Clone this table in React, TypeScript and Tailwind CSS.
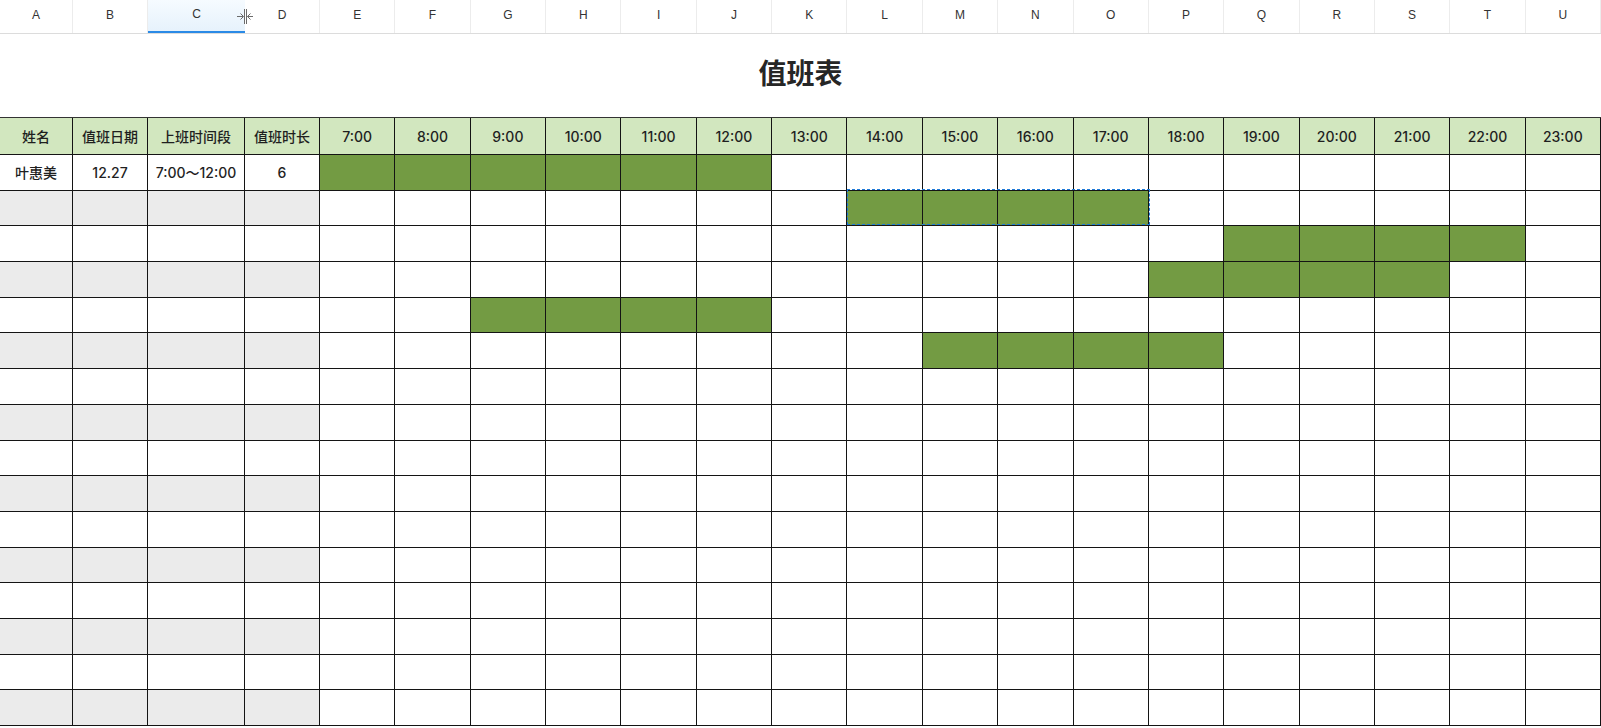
import React from 'react';

const letters = 'ABCDEFGHIJKLMNOPQRSTU'.split('');
const hours = Array.from({ length: 17 }, (_, i) => `${i + 7}:00`);

// filled hour ranges per row: [startCol, endCol] (0 = 7:00)
const shifts: Record<number, [number, number]> = {
  0: [0, 5],
  1: [7, 10],
  2: [12, 15],
  3: [11, 14],
  4: [2, 5],
  5: [8, 11],
};

const firstRow = ['叶惠美', '12.27', '7:00～12:00', '6'];

const gridCols = 'grid grid-cols-[73px_75px_97px_75px_repeat(17,1fr)]';

function ResizeIcon() {
  return (
    <svg width="18" height="17" viewBox="0 0 18 17" className="absolute left-[236px] top-[8px]">
      <g stroke="#6b6b6b" strokeWidth="1" fill="none">
        <line x1="8.5" y1="1" x2="8.5" y2="16" />
        <line x1="10.5" y1="1" x2="10.5" y2="16" />
        <line x1="1" y1="8.5" x2="7" y2="8.5" />
        <polyline points="4.5,5.5 7.5,8.5 4.5,11.5" />
        <line x1="17" y1="8.5" x2="11.5" y2="8.5" />
        <polyline points="14.5,5.5 11.5,8.5 14.5,11.5" />
      </g>
    </svg>
  );
}

export default function App() {
  return (
    <div className="relative h-[728px] w-[1601px] overflow-hidden bg-white font-['Inter','Noto_Sans_CJK_SC',sans-serif] text-[#1f1f1f]">
      {/* column letters */}
      <div className={`${gridCols} relative h-[34px] border-b border-[#dcdcdc]`}>
        {letters.map((l) => (
          <div
            key={l}
            className={
              l === 'C'
                ? 'flex items-center justify-center border-b-2 border-[#2a8ae6] bg-gradient-to-b from-[#f6fbff] to-[#e6f2fc] pb-1 font-["Liberation_Sans",sans-serif] text-[12px] text-[#333]'
                : 'flex items-center justify-center border-r border-[#ececec] pb-1 font-["Liberation_Sans",sans-serif] text-[12px] text-[#333]'
            }
          >
            {l}
          </div>
        ))}
        <ResizeIcon />
      </div>

      {/* title */}
      <div className="flex h-[83px] items-center justify-center pb-1 text-[28px] font-bold text-[#262626]">
        值班表
      </div>

      {/* table */}
      <div className="relative">
        <div className={`${gridCols} border-t border-[#333]`}>
          {['姓名', '值班日期', '上班时间段', '值班时长', ...hours].map((h) => (
            <div
              key={h}
              className="flex h-[37px] items-center justify-center border-r border-b border-[#141414] bg-[#d2e7bf] text-[14px] font-medium"
            >
              {h}
            </div>
          ))}
          {Array.from({ length: 16 }).map((_, r) => {
            const shift = shifts[r];
            const gray = r % 2 === 1;
            return (
              <React.Fragment key={r}>
                {[0, 1, 2, 3].map((c) => (
                  <div
                    key={`i${c}`}
                    className={`flex h-[35.7px] items-center justify-center border-r border-b border-[#141414] text-[14px] font-medium ${
                      gray ? 'bg-[#ebebeb]' : 'bg-white'
                    }`}
                  >
                    {r === 0 ? firstRow[c] : ''}
                  </div>
                ))}
                {hours.map((h, c) => {
                  const on = shift && c >= shift[0] && c <= shift[1];
                  return (
                    <div
                      key={h}
                      className={`h-[35.7px] border-r border-b border-[#141414] ${on ? 'bg-[#739b43]' : 'bg-white'}`}
                    />
                  );
                })}
              </React.Fragment>
            );
          })}
        </div>
        {/* copy selection marquee */}
        <div className="pointer-events-none absolute left-[847px] top-[72px] h-[36px] w-[303px] border border-dashed border-[#1f7ad8]" />
      </div>
    </div>
  );
}
